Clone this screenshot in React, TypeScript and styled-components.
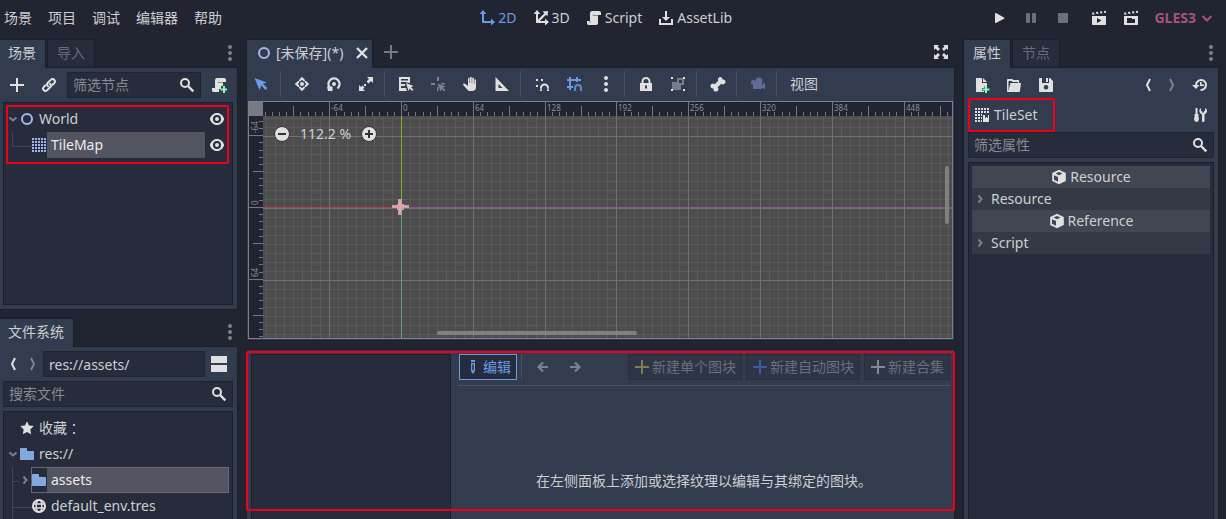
import React from "react";
import styled, { createGlobalStyle, css } from "styled-components";

const c = {
  base: "#212531",
  panel: "#333b4f",
  dark: "#262c3b",
  line: "#1b1f2a",
  text: "#cdcfd2",
  icon: "#e0e0e0",
  dim: "#7d818b",
  accent: "#699ce8",
  node: "#a5b7f3",
  folder: "#84a7dd",
  mark: "#f00018",
};

const GlobalStyle = createGlobalStyle`
  * { box-sizing: border-box; }
  body {
    margin: 0;
    background: ${c.base};
    color: ${c.text};
    font: 14px/20px "Noto Sans", "Noto Sans CJK SC", sans-serif;
  }
  button, input { font: inherit; color: inherit; }
`;

/* ---------- icons ---------- */

const Svg = styled.svg`
  display: block;
  flex: none;
  width: 16px;
  height: 16px;
`;

type IconProps = { name: keyof typeof shapes; color?: string };

const script =
  "M6 1C4.800 1.200 4 2.200 4 3.200V11H1v2.200C1 14.200 1.800 15 2.800 15H10c1.200 0 2-.8 2-2V5h3V3c0-1.200-.8-2-2-2z";

const clapper =
  "M1 2.800l2-.3.500 2-2 .4zM5 2l2-.3.500 2-2 .4zM9 1.500l2-.3.500 2-2 .4zM13 1l1.800-.3.400 2-2 .4z";

const shapes = {
  axis2d: (
    <path d="M4 0 .6 4H3v8.500c0 .3.200.5.5.5H12v2.500l4-3.500-4-3.500V11H5V4h2.400z" />
  ),
  axis3d: (
    <path d="M4 0 .6 4H3v8.500c0 .3.200.5.5.5H12v2.500l4-3.500-4-3.500V11H6.800L13 4.800 14.500 6.500 15 1 9.500 1.500 11.400 3.300 5 9.700V4h2.400z" />
  ),
  script: (
    <>
      <path d={script} />
      <path d="M7 4.500V5.500H12" fill="none" stroke="#8c8f96" />
      <path d="M4 11v2" stroke="#8c8f96" />
    </>
  ),
  scriptAdd: (
    <>
      <path d="M6 1C4.800 1.200 4 2.200 4 3.200V11H1v2.200C1 14.200 1.800 15 2.800 15H8V12h2V9h2V5h3V3c0-1.200-.8-2-2-2z" />
      <path d="M7 4.500V5.500H12" fill="none" stroke="#8c8f96" />
      <path d="M12 9h2v2.500h2v2h-2V16h-2v-2.500h-2.500v-2H12z" fill="#84ffb1" />
    </>
  ),
  assetLib: <path d="M7 1h2v6h3l-4 4-4-4h3zM1 9h2v4h10V9h2v6H1z" />,
  play: <path d="M4 3.700v8.600c0 .6.500.9 1 .6l8-4.200c.5-.3.5-1 0-1.300L5 3.100c-.5-.3-1 0-1 .6z" />,
  pause: (
    <>
      <rect x="3" y="3" width="4" height="10" rx="1" />
      <rect x="9" y="3" width="4" height="10" rx="1" />
    </>
  ),
  stop: <rect x="3" y="3" width="10" height="10" rx="1" />,
  playScene: (
    <>
      <path d={clapper} />
      <path fillRule="evenodd" d="M1 6h14v8c0 .6-.4 1-1 1H2c-.6 0-1-.4-1-1zm5 2v5l4.500-2.500z" />
    </>
  ),
  playCustom: (
    <>
      <path d={clapper} />
      <path fillRule="evenodd" d="M1 6h14v8c0 .6-.4 1-1 1H2c-.6 0-1-.4-1-1zm3 2v5h8V9H9V8z" />
    </>
  ),
  chevronDown: <path d="M3.500 6 8 10.500 12.500 6" fill="none" stroke="currentColor" strokeWidth="2" />,
  treeOpen: <path d="M4.500 6.500 8 9.500 11.500 6.500" fill="none" stroke="currentColor" strokeWidth="2" />,
  treeShut: <path d="M6.500 4.500 9.500 8 6.500 11.500" fill="none" stroke="currentColor" strokeWidth="2" />,
  dots: (
    <>
      <circle cx="8" cy="2" r="2" />
      <circle cx="8" cy="8" r="2" />
      <circle cx="8" cy="14" r="2" />
    </>
  ),
  add: <path d="M7 1h2v6h6v2H9v6H7V9H1V7h6z" />,
  link: (
    <g fill="none" stroke="currentColor" strokeWidth="2" strokeLinecap="round">
      <path d="M7 9.200C5.800 8 5.800 6.800 6.800 5.800L9.800 2.900C11 1.700 12.300 1.900 13.200 2.800s1 2.200 0 3.400L11.500 7.800" />
      <path d="M9 6.800c1.200 1.200 1.200 2.400.2 3.400l-3 2.900C5 14.300 3.700 14.100 2.800 13.200s-1-2.200 0-3.400L4.500 8.200" />
    </g>
  ),
  search: (
    <g fill="none" stroke="currentColor" strokeWidth="2">
      <circle cx="6" cy="6" r="4" />
      <path d="M9 9l5.300 5.300" strokeWidth="2.400" />
    </g>
  ),
  node2d: <circle cx="8" cy="8" r="5" fill="none" stroke="currentColor" strokeWidth="2" />,
  tileMap: (
    <path d="M1 2h14M1 5h14M1 8h14M1 11h14M1 14h14" stroke="currentColor" strokeWidth="2" strokeDasharray="2 1" />
  ),
  tileSet: (
    <>
      <path d="M1 2h14M1 5h14M1 8h7M1 11h7M1 14h7" stroke="currentColor" strokeWidth="2" strokeDasharray="2 1" />
      <path d="M9 8h2v3l1.500-1L14 11V8h1v7H9z" />
    </>
  ),
  eye: (
    <>
      <path
        fillRule="evenodd"
        d="M8 2C4.500 2 2 4.500.8 8 2 11.500 4.500 14 8 14s6-2.500 7.200-6C14 4.500 11.500 2 8 2zm0 2a4 4 0 1 1 0 8 4 4 0 0 1 0-8z"
      />
      <circle cx="8" cy="8" r="2" />
    </>
  ),
  back: <path d="M10 2 7 8l3 6" fill="none" stroke="currentColor" strokeWidth="2" />,
  forward: <path d="M6 2 9 8 6 14" fill="none" stroke="currentColor" strokeWidth="2" />,
  split: <path d="M0 0h16v7H0zM0 9h16v7H0z" />,
  star: <path d="M8 1.200l2 4.300 4.800.6-3.500 3.300.9 4.800L8 12l-4.200 2.200.9-4.800L1.200 6.100 6 5.500z" />,
  folder: <path d="M2 2h5c1 0 1 0 1 1v1c0 1 .3 1 1 1h5c.6 0 1 .4 1 1v7c0 .6-.4 1-1 1H2c-.6 0-1-.4-1-1V3c0-.6.4-1 1-1z" />,
  globe: (
    <g fill="none" stroke="currentColor">
      <circle cx="8" cy="8" r="6" strokeWidth="2" />
      <ellipse cx="8" cy="8" rx="2.800" ry="6" strokeWidth="1.400" />
      <path d="M2 6h12M2 10h12" strokeWidth="1.400" />
    </g>
  ),
  close: <path d="M3 3l10 10M13 3 3 13" stroke="currentColor" strokeWidth="2.400" />,
  expand: (
    <path d="M1 1h5L4.500 2.500 7 5 5 7 2.500 4.500 1 6zM15 1v5l-1.500-1.500L11 7 9 5l2.500-2.500L10 1zM1 15v-5l1.500 1.500L5 9l2 2-2.500 2.500L6 15zM15 15h-5l1.500-1.500L9 11l2-2 2.500 2.500L15 10z" />
  ),
  select: <path d="M.5 2 5.500 14 7.400 9.500l4 4.500 2-2L9 8l3.800-1.600z" />,
  move: (
    <>
      <path d="M8 .8 11 4v1.200H9.500L8 3.800 6.500 5.200H5V4zM8 15.200 5 12v-1.200h1.500L8 12.200l1.500-1.400H11V12zM.8 8 4 5h1.200v1.500L3.800 8l1.400 1.500V11H4zM15.200 8 12 11h-1.200V9.500L12.200 8l-1.400-1.500V5H12z" />
      <circle cx="8" cy="8" r="2" />
    </>
  ),
  rotate: (
    <>
      <path d="M4.500 12.400A5.600 5.600 0 1 1 11.500 12.400" fill="none" stroke="currentColor" strokeWidth="2.200" />
      <path d="M1 10.500h5.500V15H2z" />
      <circle cx="8" cy="8" r="2" />
    </>
  ),
  scale: (
    <>
      <path d="M9 1h6v6l-2-2-2.500 2.500-2-2L11 3zM1 15V9l2 2 1.500-1.500 2 2L5 13l2 2z" />
      <rect x="6" y="8" width="2" height="2" />
    </>
  ),
  listSelect: (
    <path fillRule="evenodd" d="M1 1h11v6L7 6H3v2h4v2H3v2h5l1 3H1zm2 2v1.500h7V3zM8 7l7.500 3-2.500 1.200 2.500 2.500-1.300 1.300-2.500-2.500L10.500 15z" />
  ),
  pivot: (
    <path d="M7 1h2v4H7zM1 7h4v2H1zM11 7h4v1.500h-4zM7 11h1.500v4H7zM7.500 7.500l8 3-2.500 1.200 2.500 2.500-1.300 1.300-2.500-2.500L10.500 15.500z" />
  ),
  pan: (
    <path d="M6 2.500c0-1 1.500-1 1.500 0V7h.5V1.500c0-1 1.700-1 1.700 0V7h.5V2.300c0-1 1.700-1 1.700 0V8h.5V4c0-1 1.600-1 1.600 0v7c0 2.500-1.500 4-4 4H8.500c-2 0-3-.8-4-2.300L1.200 9c-.5-1.200.8-2 1.800-1.200L6 10z" />
  ),
  ruler: <path fillRule="evenodd" d="M1.500 1 15 15H1.500zm3 7v4h4z" />,
  smartSnap: (
    <>
      <path d="M2 3h2v2H2zM7 3h2v2H7zM2 9h2v2H2z" />
      <path d="M7 15v-3a3.500 3.500 0 0 1 7 0v3" fill="none" stroke="currentColor" strokeWidth="2" />
      <path d="M6 13h2M13 13h2" stroke={c.panel} strokeWidth=".6" />
    </>
  ),
  gridSnap: (
    <>
      <path d="M4 1v13M11 1v5M1 4h14M1 11h6" stroke="currentColor" strokeWidth="2" fill="none" />
      <path d="M9 15v-3a3 3 0 0 1 6 0v3" fill="none" stroke="currentColor" strokeWidth="2" opacity=".8" />
    </>
  ),
  lock: (
    <>
      <path d="M4.500 8V5.500a3.500 3.500 0 0 1 7 0V8" fill="none" stroke="currentColor" strokeWidth="2" />
      <path fillRule="evenodd" d="M2 7h12v8H2zm5 2.500v3h2v-3z" />
    </>
  ),
  group: (
    <>
      <path fillRule="evenodd" opacity=".4" d="M7 2h7v7h-3v5H2V6h5zm2 2v3h3V4z" />
      <path d="M1 1h2v2H1zM13 1h2v2h-2zM1 13h2v2H1zM13 13h2v2h-2z" />
    </>
  ),
  bone: (
    <path d="M10.500 1a2.500 2.500 0 0 0-2.200 3.700L4.700 8.300A2.500 2.500 0 1 0 3.500 12.500 2.500 2.500 0 1 0 7.700 11.300l3.600-3.600A2.500 2.500 0 1 0 12.500 3.500 2.500 2.500 0 0 0 10.500 1z" />
  ),
  camera: (
    <>
      <circle cx="9" cy="5" r="3.500" />
      <circle cx="3.500" cy="6.500" r="2.500" />
      <path d="M3 7h9v5c0 .6-.4 1-1 1H4c-.6 0-1-.4-1-1zM11 10l3-3h1v6h-1z" />
    </>
  ),
  edit: <path fillRule="evenodd" d="M6 1h4v2H6zM6 4h4v8l-2 3-2-3zm1.300 1.300v6h1.400v-6z" />,
  arrowLeft: <path d="M8 3.500 3.500 8 8 12.500M4 8h9" fill="none" stroke="currentColor" strokeWidth="2.200" />,
  arrowRight: <path d="M8 3.500 12.500 8 8 12.500M12 8H3" fill="none" stroke="currentColor" strokeWidth="2.200" />,
  fileAdd: (
    <>
      <path d="M2 1h6v5h5v3h-2.500v2H8v3h2v1H2zM9 1l4 4H9z" />
      <path d="M11 9h2v2.500h2.500v2H13V16h-2v-2.500H8.500v-2H11z" fill="#84ffb1" />
    </>
  ),
  open: (
    <path fillRule="evenodd" d="M2 2h4c.6 0 1 .4 1 1h5c.6 0 1 .4 1 1v2h2l-1 8c0 .6-.5 1-1 1H2c-.6 0-1-.4-1-1V3c0-.6.4-1 1-1zm.5 2v9L4.500 6H12V5H6V4z" />
  ),
  save: (
    <path fillRule="evenodd" d="M2 1h2v5h7V1h1l3 3v10c0 .6-.4 1-1 1H2c-.6 0-1-.4-1-1V2c0-.6.4-1 1-1zm6 7a2.300 2.300 0 1 0 0 4.600A2.300 2.300 0 0 0 8 8zM8 1h2v4H8z" />
  ),
  history: (
    <>
      <path d="M4 9.500V8a5 5 0 1 1 4.500 5" fill="none" stroke="currentColor" strokeWidth="2" />
      <path d="M0 8h7.500L4 12zM8 5h1.600v2.500H12V9H8z" />
    </>
  ),
  tools: (
    <path d="M3.500 1h2v6h1v2H6c1.500 1.500 1.200 6-1.500 6S1.500 10.500 3 9h-.5V7h1zM9 1v3h1v1.500h2V4h1V1c3 1.500 2.500 5-.5 6.500V14c0 1.300-2.500 1.300-2.500 0V7.500C7 6 6.500 2.500 9 1z" />
  ),
  cube: (
    <path fillRule="evenodd" d="M8 .8l6.800 3.200v8L8 15.200 1.200 12V4zM8 3 4.500 4.600 8 6.200l3.500-1.600zM3 6.200v4.600l4 2V8z" />
  ),
};

const Icon = ({ name, color = c.icon }: IconProps) => (
  <Svg viewBox="0 0 16 16" fill="currentColor" style={{ color }} aria-hidden="true">
    {shapes[name]}
  </Svg>
);

/* ---------- shared parts ---------- */

const Shell = styled.div`
  height: 100vh;
  display: flex;
  flex-direction: column;
  overflow: hidden;
`;

const PlainButton = styled.button`
  display: flex;
  align-items: center;
  justify-content: center;
  gap: 3px;
  padding: 0;
  border: 0;
  background: none;
  white-space: nowrap;
`;

const IconButton = styled(PlainButton)<{ $w?: number; $h?: number }>`
  flex: none;
  width: ${(p) => p.$w ?? 28}px;
  height: ${(p) => p.$h ?? 26}px;
`;

const Header = styled.header`
  flex: none;
  height: 39px;
  padding: 0 11px 3px 4px;
  display: flex;
  align-items: center;
  justify-content: space-between;
`;

const Group = styled.div<{ $gap: number }>`
  display: flex;
  align-items: center;
  gap: ${(p) => p.$gap}px;
`;

const Views = styled(Group)`
  padding-left: 4px;
`;

const Renderer = styled(PlainButton)`
  color: #a6537f;
  font-weight: 700;
`;

const Body = styled.div`
  flex: 1;
  min-height: 0;
  display: grid;
  grid-template-columns: 238px minmax(0, 1fr) 256px;
  grid-template-rows: minmax(0, 1fr);
  gap: 8px;
  padding-right: 7px;
`;

const Column = styled.div`
  display: flex;
  flex-direction: column;
  gap: 8px;
  min-width: 0;
  min-height: 0;
`;

const Dock = styled.section<{ $grow: number }>`
  flex: ${(p) => p.$grow} 1 0;
  min-height: 0;
  display: flex;
  flex-direction: column;
`;

const TabBar = styled.div<{ $inset?: boolean }>`
  flex: none;
  display: flex;
  align-items: stretch;
  gap: 1px;
  height: 29px;
  margin-bottom: -1px;
  padding-right: ${(p) => (p.$inset ? 5 : 0)}px;
`;

const Tab = styled.button<{ $active?: boolean; $flush?: boolean }>`
  position: relative;
  z-index: ${(p) => (p.$active ? 1 : 0)};
  display: flex;
  align-items: center;
  gap: 4px;
  padding: 0 9px ${(p) => (p.$active ? 2 : 1)}px ${(p) => (p.$flush ? 8 : 9)}px;
  border: 1px solid ${c.line};
  border-width: 1px 1px 0 ${(p) => (p.$flush ? 0 : 1)}px;
  background: ${(p) => (p.$active ? c.panel : c.dark)};
  color: ${(p) => (p.$active ? c.text : "#686c77")};
  margin-bottom: ${(p) => (p.$active ? 0 : 1)}px;
  white-space: nowrap;
`;

const SceneTab = styled(Tab)`
  padding-right: 2px;
`;

const CloseMark = styled.span`
  padding-left: 7px;
`;

const Spacer = styled.div`
  flex: 1;
`;

const Panel = styled.div<{ $flush?: boolean }>`
  position: relative;
  flex: 1;
  min-height: 0;
  display: flex;
  flex-direction: column;
  padding: 4px;
  border: 1px solid ${c.line};
  background: ${c.panel};
  ${(p) =>
    p.$flush &&
    css`
      border-left: 0;
      padding-left: 3px;
    `}
`;

const CanvasPanel = styled(Panel)`
  padding: 0 1px 1px;
`;

const PanelBottomless = styled(Panel)`
  border-bottom: 0;
  padding-bottom: 0;
`;

const Bar = styled.div<{ $gap?: number; $h?: number }>`
  flex: none;
  display: flex;
  align-items: center;
  gap: ${(p) => p.$gap ?? 4}px;
  height: ${(p) => p.$h ?? 26}px;
  margin-bottom: 4px;
`;

const TightBar = styled(Bar)`
  margin-bottom: 0;
`;

const CanvasBar = styled(Bar)`
  margin-bottom: 1px;
`;

const Field = styled.label`
  flex: 1;
  min-width: 0;
  height: 26px;
  display: flex;
  align-items: center;
  padding: 0 5px;
  border: 1px solid #1f2431;
  background: ${c.dark};
`;

const TextInput = styled.input`
  flex: 1;
  min-width: 0;
  height: 24px;
  padding: 0;
  border: 0;
  outline: 0;
  background: none;
  &:placeholder-shown {
    padding-bottom: 2px;
  }
  &::placeholder {
    color: #868a92;
    opacity: 1;
  }
`;

const Well = styled.div<{ $open?: boolean }>`
  position: relative;
  flex: 1;
  min-height: 0;
  padding: 3px;
  border: 1px solid ${c.line};
  border-bottom-width: ${(p) => (p.$open ? 0 : 1)}px;
  background: ${c.dark};
  overflow: hidden;
`;

const Highlight = styled.div<{ $t: number; $r: number; $l: number; $h: number }>`
  position: absolute;
  z-index: 2;
  top: ${(p) => p.$t}px;
  right: ${(p) => p.$r}px;
  left: ${(p) => p.$l}px;
  height: ${(p) => p.$h}px;
  border: 2px solid ${c.mark};
  border-radius: 2px;
  pointer-events: none;
`;

/* ---------- trees ---------- */

const Row = styled.div`
  display: flex;
  align-items: stretch;
  height: 26px;
`;

const Twist = styled.span<{ $guide?: "branch" | "end" }>`
  position: relative;
  flex: none;
  display: flex;
  align-items: center;
  justify-content: center;
  width: 12px;
  &::before {
    content: ${(p) => (p.$guide ? '""' : "none")};
    position: absolute;
    left: 5px;
    top: 0;
    width: 20px;
    height: 14px;
    border: solid #3f4554;
    border-width: 0 0 1px 1px;
  }
  &::after {
    content: ${(p) => (p.$guide === "branch" ? '""' : "none")};
    position: absolute;
    left: 5px;
    top: 0;
    height: 26px;
    border-left: 1px solid #3f4554;
  }
`;

const Shut = styled.span<{ $filled?: boolean }>`
  position: relative;
  flex: none;
  display: flex;
  align-items: center;
  justify-content: center;
  width: 12px;
  background: ${(p) => (p.$filled ? c.dark : "none")};
`;

const Pair = styled.span`
  position: relative;
  flex: none;
  display: flex;
  align-items: center;
  width: 16px;
`;

const Name = styled.span<{ $sel?: boolean }>`
  flex: 1;
  display: flex;
  align-items: center;
  padding-left: 4px;
  background: ${(p) => (p.$sel ? "#525560" : "none")};
  color: ${(p) => (p.$sel ? "#ececee" : c.text)};
  white-space: nowrap;
`;

const WideColon = styled.span`
  font-family: "Noto Sans CJK TC", sans-serif;
`;

const Focus = styled.div`
  flex: 1;
  display: flex;
  box-shadow: inset 0 0 0 1px #676a78;
  ${Name} {
    border: 1px solid #676a78;
    border-left: 0;
  }
`;

/* ---------- 2D viewport ---------- */

const Divider = styled.span`
  flex: none;
  width: 4px;
  height: 26px;
  border-left: 1px solid #495063;
`;

const Viewport = styled.div`
  position: relative;
  flex: 1;
  min-height: 0;
  border: 1px solid #7a8090;
  background: #4d4d4d;
  overflow: hidden;
`;

const CanvasSvg = styled.svg`
  display: block;
  width: 100%;
  height: 100%;
  font: 8px "Noto Sans", sans-serif;
`;

const ZoomControl = styled.div`
  position: absolute;
  top: 22px;
  left: 25px;
  display: flex;
  align-items: center;
  gap: 10px;
`;

const Scroll = styled.div<{ $vertical?: boolean }>`
  position: absolute;
  border-radius: 2px;
  background: #808080;
  ${(p) =>
    p.$vertical
      ? css`
          top: 64px;
          right: 3px;
          width: 4px;
          height: 58px;
        `
      : css`
          left: 188px;
          bottom: 3px;
          width: 200px;
          height: 4px;
        `}
`;

const RoundIcon = ({ plus }: { plus?: boolean }) => (
  <Svg viewBox="0 0 16 16" aria-hidden="true">
    <circle cx="8" cy="8" r="7.500" fill={c.icon} stroke="#333" />
    <path d={plus ? "M4 8h8M8 4v8" : "M4 8h8"} stroke="#333" strokeWidth="2" />
  </Svg>
);

const UNIT = 71.8; // 64 world units at the current zoom
const ORIGIN = { x: 152, y: 105 };
const RULER = 14;
const range = (from: number, to: number) => Array.from({ length: to - from }, (_, i) => from + i);
const at = (origin: number, n: number, parts: number) => Math.round(origin + (n * UNIT) / parts);

const gridLines = range(-16, 200);
const ticks = range(-24, 250);

const Canvas = () => (
  <CanvasSvg aria-label="2D canvas">
    <g transform={`translate(${ORIGIN.x} ${ORIGIN.y})`} shapeRendering="crispEdges">
      {[false, true].map((major) =>
        gridLines
          .filter((n) => (n % 8 === 0) === major)
          .map((n) => (
            <g key={n} fill={major ? "#707070" : "#5a5a5a"}>
              <rect x={at(0, n, 8)} y={-200} width="1" height="2000" />
              <rect x={-200} y={at(1, n, 8)} width="3000" height="1" />
            </g>
          ))
      )}
      <rect x={-200} y={0} width="200" height="1" fill="#b2404e" />
      <rect x={0} y={0} width="3000" height="1" fill="#955091" />
      <rect x={0} y={-200} width="1" height="200" fill="#80b01c" />
      <rect x={0} y={0} width="1" height="2000" fill="#739a78" />
      <path d="M-3-8h4v5h2v1h5v3h-5v2h-2v5h-4V3h-1V1h-5v-3h5v-1h1z" fill="#b3abac" />
      <path d="M-2-6h2v4h1v1h5v1H1v1H0v4h-2V1h-1V0h-4v-1h4v-1h1z" fill="#ff9a9a" />
    </g>
    <g shapeRendering="crispEdges">
      <rect width="100%" height={RULER} fill={c.base} />
      <rect width={RULER} height="100%" fill={c.base} />
      <g fill="#737783">
        {ticks.map((n) => {
          const len = n % 10 === 0 ? 14 : n % 5 === 0 ? 10 : 4;
          const x = at(ORIGIN.x, n, 10);
          const y = at(ORIGIN.y, n, 10);
          return (
            <g key={n}>
              {x >= RULER && <rect x={x} y={RULER - len} width="1" height={len} />}
              {y >= RULER && <rect x={RULER - len} y={y} width={len} height="1" />}
            </g>
          );
        })}
        <rect width={RULER} height={RULER} fill="#777a84" />
      </g>
    </g>
    <g fill="#8b8e97">
      {range(-1, 8).map((n) => (
        <text key={n} x={at(ORIGIN.x + 2, n, 1)} y="9">
          {n * 64}
        </text>
      ))}
      {range(-1, 2).map((n) => (
        <text key={n} transform={`translate(9 ${at(ORIGIN.y - 2, n, 1)}) rotate(-90)`}>
          {n * 64}
        </text>
      ))}
    </g>
  </CanvasSvg>
);

/* ---------- tile set editor ---------- */

const Textures = styled.div`
  flex: none;
  width: 200px;
  border: 1px solid ${c.line};
  border-bottom: 0;
  background: ${c.dark};
`;

const Split = styled.div`
  flex: 1;
  min-height: 0;
  display: flex;
  gap: 7px;
`;

const Editor = styled.div`
  flex: 1;
  min-width: 0;
  display: flex;
  flex-direction: column;
`;

const EditorBar = styled.div`
  flex: none;
  display: flex;
  gap: 4px;
  padding: 0 0 5px 1px;
  border-bottom: 1px solid #4a5164;
`;

const BoxButton = styled(PlainButton)<{ $active?: boolean }>`
  height: 26px;
  gap: 2px;
  padding: 0 5px;
  border: 1px solid ${(p) => (p.$active ? c.accent : "#282e3e")};
  background: ${(p) => (p.$active ? c.dark : "#2e3547")};
  color: ${(p) => (p.$active ? c.accent : "#6a6f7c")};
`;

const Hint = styled.p`
  margin: 85px 0 0;
  text-align: center;
`;

/* ---------- inspector ---------- */

const Resource = styled.div`
  position: relative;
  display: flex;
  align-items: center;
  gap: 4px;
  width: 87px;
  height: 34px;
  padding-left: 6px;
`;

const Section = styled.div<{ $head?: boolean }>`
  display: flex;
  align-items: center;
  justify-content: ${(p) => (p.$head ? "center" : "flex-start")};
  gap: 3px;
  height: 22px;
  background: ${(p) => (p.$head ? "#414653" : "#343946")};
`;

const views = [
  ["axis2d", "2D", c.accent],
  ["axis3d", "3D", c.icon],
  ["script", "Script", c.icon],
  ["assetLib", "AssetLib", c.icon],
] as const;

const tools: (keyof typeof shapes | "|")[] = [
  "select", "|", "move", "rotate", "scale", "|", "listSelect", "pivot", "pan", "ruler", "|",
  "smartSnap", "gridSnap", "dots", "|", "lock", "group", "|", "bone", "|", "camera", "|",
];
const toolColors: Partial<Record<keyof typeof shapes, string>> = {
  select: c.accent,
  gridSnap: c.accent,
  pivot: "#7c818d",
  camera: "#5f6b91",
};

const newTiles = [
  ["新建单个图块", "#7f7c48"],
  ["新建自动图块", "#3b5f9e"],
  ["新建合集", "#858993"],
];

export default function App() {
  return (
    <Shell>
      <GlobalStyle />
      <Header>
        <Group as="nav" $gap={16}>
          {["场景", "项目", "调试", "编辑器", "帮助"].map((m) => (
            <PlainButton key={m}>{m}</PlainButton>
          ))}
        </Group>
        <Views $gap={16}>
          {views.map(([icon, label, color]) => (
            <PlainButton key={label} style={{ color: color === c.icon ? c.text : color }}>
              <Icon name={icon} color={color} />
              {label}
            </PlainButton>
          ))}
        </Views>
        <Group $gap={13}>
          <Group $gap={4}>
            <IconButton aria-label="Play"><Icon name="play" /></IconButton>
            <IconButton aria-label="Pause"><Icon name="pause" color="#6e7178" /></IconButton>
            <IconButton aria-label="Stop"><Icon name="stop" color="#6e7178" /></IconButton>
            <IconButton $w={36} aria-label="Play scene"><Icon name="playScene" /></IconButton>
            <IconButton $w={20} aria-label="Play custom scene"><Icon name="playCustom" /></IconButton>
          </Group>
          <Renderer>
            GLES3
            <Icon name="chevronDown" color="#a6537f" />
          </Renderer>
        </Group>
      </Header>

      <Body>
        <Column>
          <Dock $grow={271}>
            <TabBar>
              <Tab $active $flush>场景</Tab>
              <Tab>导入</Tab>
              <Spacer />
              <IconButton $w={16} $h={28} aria-label="Dock menu"><Icon name="dots" color={c.dim} /></IconButton>
            </TabBar>
            <Panel $flush>
              <Bar>
                <IconButton aria-label="Add node"><Icon name="add" /></IconButton>
                <IconButton aria-label="Instance scene"><Icon name="link" /></IconButton>
                <Field>
                  <TextInput aria-label="筛选节点" placeholder="筛选节点" />
                  <Icon name="search" />
                </Field>
                <IconButton aria-label="Attach script"><Icon name="scriptAdd" /></IconButton>
              </Bar>
              <Well>
                <Row>
                  <Twist><Icon name="treeOpen" color={c.dim} /></Twist>
                  <Pair><Icon name="node2d" color={c.node} /></Pair>
                  <Name>World</Name>
                  <IconButton $w={24} aria-label="Toggle World"><Icon name="eye" /></IconButton>
                </Row>
                <Row>
                  <Twist $guide="end" />
                  <Shut />
                  <Pair><Icon name="tileMap" color={c.node} /></Pair>
                  <Name $sel>TileMap</Name>
                  <IconButton $w={24} aria-label="Toggle TileMap"><Icon name="eye" /></IconButton>
                </Row>
                <Highlight $t={2} $r={3} $l={2} $h={59} />
              </Well>
            </Panel>
          </Dock>

          <Dock $grow={201}>
            <TabBar>
              <Tab $active $flush>文件系统</Tab>
              <Spacer />
              <IconButton $w={16} $h={28} aria-label="Dock menu"><Icon name="dots" color={c.dim} /></IconButton>
            </TabBar>
            <PanelBottomless $flush>
              <Bar $gap={0}>
                <IconButton $w={20} aria-label="Back"><Icon name="back" /></IconButton>
                <IconButton $w={20} aria-label="Forward"><Icon name="forward" color={c.dim} /></IconButton>
                <Field>
                  <TextInput aria-label="Path" defaultValue="res://assets/" />
                </Field>
                <IconButton aria-label="Split mode"><Icon name="split" /></IconButton>
              </Bar>
              <Bar>
                <Field>
                  <TextInput aria-label="搜索文件" placeholder="搜索文件" />
                  <Icon name="search" />
                </Field>
              </Bar>
              <Well $open>
                <Row>
                  <Twist />
                  <Pair><Icon name="star" /></Pair>
                  <Name>收藏<WideColon>：</WideColon></Name>
                </Row>
                <Row>
                  <Twist><Icon name="treeOpen" color={c.dim} /></Twist>
                  <Pair><Icon name="folder" color={c.folder} /></Pair>
                  <Name>res://</Name>
                </Row>
                <Row>
                  <Twist $guide="branch" />
                  <Shut $filled><Icon name="treeShut" color={c.dim} /></Shut>
                  <Focus>
                    <Pair><Icon name="folder" color={c.folder} /></Pair>
                    <Name $sel>assets</Name>
                  </Focus>
                </Row>
                <Row>
                  <Twist $guide="branch" />
                  <Shut />
                  <Pair><Icon name="globe" /></Pair>
                  <Name>default_env.tres</Name>
                </Row>
              </Well>
            </PanelBottomless>
          </Dock>
        </Column>

        <Column>
          <Dock $grow={302}>
            <TabBar $inset>
              <SceneTab $active>
                <Icon name="node2d" color={c.node} />
                [未保存](*)
                <CloseMark><Icon name="close" /></CloseMark>
              </SceneTab>
              <IconButton $w={34} aria-label="New scene"><Icon name="add" color="#777a82" /></IconButton>
              <Spacer />
              <IconButton $w={18} aria-label="Distraction free"><Icon name="expand" /></IconButton>
            </TabBar>
            <CanvasPanel>
              <CanvasBar $h={32}>
                {tools.map((t, i) =>
                  t === "|" ? (
                    <Divider key={i} />
                  ) : (
                    <IconButton key={i} aria-label={t}>
                      <Icon name={t} color={toolColors[t]} />
                    </IconButton>
                  )
                )}
                <IconButton $w={40}>视图</IconButton>
              </CanvasBar>
              <Viewport>
                <Canvas />
                <ZoomControl>
                  <PlainButton aria-label="Zoom out"><RoundIcon /></PlainButton>
                  <span>112.2 %</span>
                  <PlainButton aria-label="Zoom in"><RoundIcon plus /></PlainButton>
                </ZoomControl>
                <Scroll />
                <Scroll $vertical />
              </Viewport>
            </CanvasPanel>
          </Dock>

          <Dock $grow={170}>
            <PanelBottomless>
              <Split>
                <Textures />
                <Editor>
                  <EditorBar>
                    <BoxButton $active>
                      <Icon name="edit" color={c.accent} />
                      编辑
                    </BoxButton>
                    <Divider />
                    <IconButton aria-label="Previous"><Icon name="arrowLeft" color={c.dim} /></IconButton>
                    <IconButton aria-label="Next"><Icon name="arrowRight" color={c.dim} /></IconButton>
                    <Spacer />
                    {newTiles.map(([label, color]) => (
                      <BoxButton key={label} disabled>
                        <Icon name="add" color={color} />
                        {label}
                      </BoxButton>
                    ))}
                  </EditorBar>
                  <Hint>在左侧面板上添加或选择纹理以编辑与其绑定的图块。</Hint>
                </Editor>
              </Split>
              <Highlight $t={1} $r={-1} $l={-1} $h={160} />
            </PanelBottomless>
          </Dock>
        </Column>

        <Column>
          <Dock $grow={1}>
            <TabBar>
              <Tab $active>属性</Tab>
              <Tab>节点</Tab>
              <Spacer />
              <IconButton $w={16} $h={28} aria-label="Dock menu"><Icon name="dots" color={c.dim} /></IconButton>
            </TabBar>
            <PanelBottomless>
              <TightBar>
                <IconButton aria-label="New resource"><Icon name="fileAdd" /></IconButton>
                <IconButton aria-label="Open resource"><Icon name="open" /></IconButton>
                <IconButton aria-label="Save resource"><Icon name="save" /></IconButton>
                <Spacer />
                <IconButton $w={20} aria-label="Back"><Icon name="back" /></IconButton>
                <IconButton $w={20} aria-label="Forward"><Icon name="forward" color={c.dim} /></IconButton>
                <IconButton aria-label="History"><Icon name="history" /></IconButton>
              </TightBar>
              <TightBar $h={34}>
                <Resource>
                  <Icon name="tileSet" />
                  TileSet
                  <Highlight $t={0} $r={0} $l={0} $h={34} />
                </Resource>
                <Spacer />
                <IconButton aria-label="Tools"><Icon name="tools" /></IconButton>
              </TightBar>
              <Bar>
                <Field>
                  <TextInput aria-label="筛选属性" placeholder="筛选属性" />
                  <Icon name="search" />
                </Field>
              </Bar>
              <Well $open>
                <Section $head><Icon name="cube" />Resource</Section>
                <Section><Icon name="treeShut" color={c.dim} />Resource</Section>
                <Section $head><Icon name="cube" />Reference</Section>
                <Section><Icon name="treeShut" color={c.dim} />Script</Section>
              </Well>
            </PanelBottomless>
          </Dock>
        </Column>
      </Body>
    </Shell>
  );
}
